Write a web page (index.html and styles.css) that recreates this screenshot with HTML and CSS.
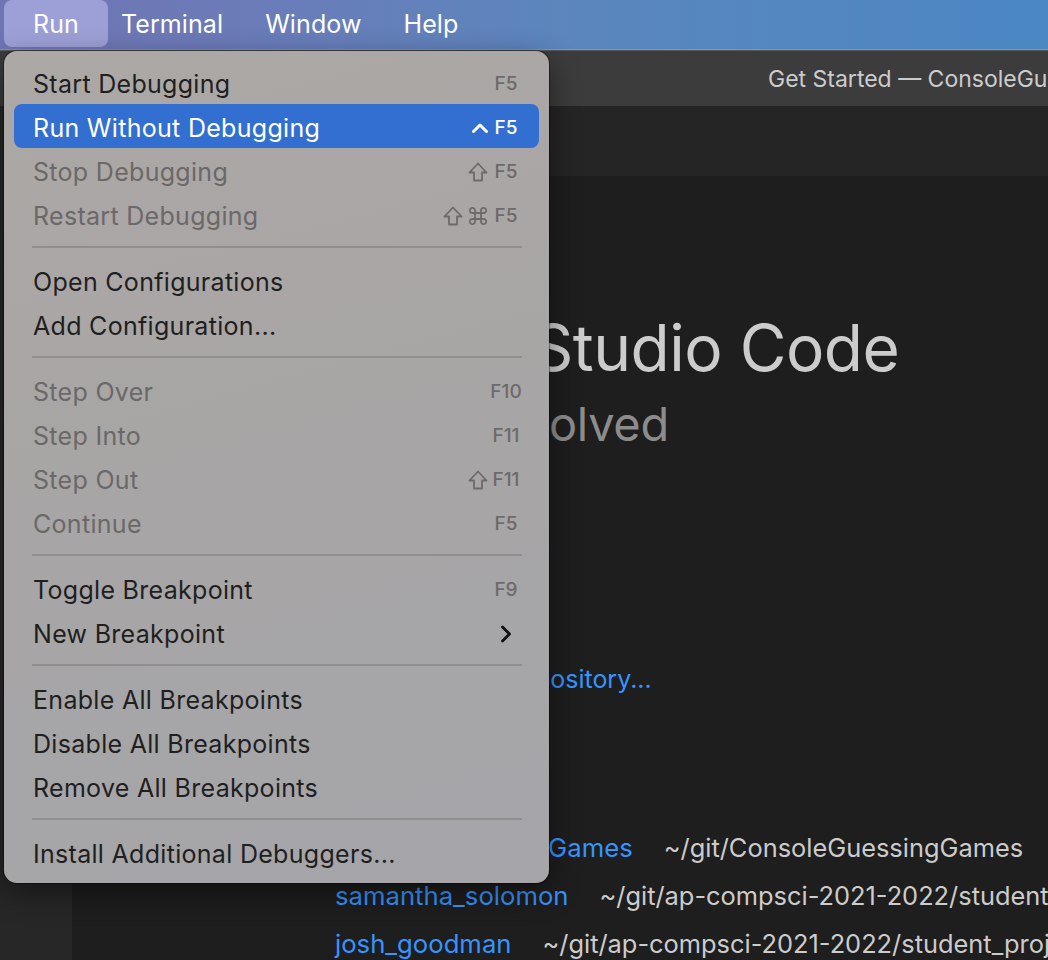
FILE: index.html
```html
<!DOCTYPE html>
<html>
<head>
<meta charset="utf-8">
<link rel="stylesheet" href="styles.css">
</head>
<body>
<div class="menubar">
  <span class="mb-item mb-active">Run</span>
  <span class="mb-item">Terminal</span>
  <span class="mb-item">Window</span>
  <span class="mb-item">Help</span>
</div>
<div class="window">
  <div class="titlebar"><span class="title">Get Started — ConsoleGuessingGames</span></div>
  <div class="workbench">
    <div class="activitybar"></div>
    <div class="main">
      <div class="tabs"></div>
      <div class="editor">
        <div class="welcome">
          <h1 class="w-title">Visual Studio Code</h1>
          <p class="w-subtitle">Editing evolved</p>
          <h2 class="w-heading w-start">Start</h2>
          <ul class="start-list">
            <li><span class="ico"></span><span class="link">New File...</span></li>
            <li><span class="ico"></span><span class="link">Open...</span></li>
            <li><span class="ico"></span><span class="link">Clone Git Repository...</span></li>
          </ul>
          <h2 class="w-heading w-recent">Recent</h2>
          <ul class="recent-list">
            <li><span class="link">ConsoleGuessingGames</span><span class="path">~/git/ConsoleGuessingGames</span></li>
            <li><span class="link">samantha_solomon</span><span class="path">~/git/ap-compsci-2021-2022/student_projects/samantha_solomon</span></li>
            <li><span class="link">josh_goodman</span><span class="path">~/git/ap-compsci-2021-2022/student_projects/josh_goodman</span></li>
          </ul>
        </div>
      </div>
    </div>
  </div>
</div>

<div class="dropdown">
  <div class="mi"><span class="lbl">Start Debugging</span><span class="mods"></span><span class="key">F5</span></div>
  <div class="mi mi-sel"><span class="lbl">Run Without Debugging</span><span class="mods"><svg class="caret" viewBox="0 0 16 10" width="16" height="10"><polyline points="1.5,8.5 8,2 14.5,8.5"/></svg></span><span class="key">F5</span></div>
  <div class="mi mi-dis"><span class="lbl">Stop Debugging</span><span class="mods"><svg class="shift" viewBox="0 0 20 20" width="20" height="20"><path d="M10 1.5 L18.5 10.5 H14 V18.5 H6 V10.5 H1.5 Z"/></svg></span><span class="key">F5</span></div>
  <div class="mi mi-dis"><span class="lbl">Restart Debugging</span><span class="mods"><svg class="shift" viewBox="0 0 20 20" width="20" height="20"><path d="M10 1.5 L18.5 10.5 H14 V18.5 H6 V10.5 H1.5 Z"/></svg><svg class="cmd" viewBox="0 0 20 20" width="20" height="20"><path d="M7 7 V4.5 A2.6 2.6 0 1 0 4.5 7 H15.5 A2.6 2.6 0 1 0 13 4.5 V15.5 A2.6 2.6 0 1 0 15.5 13 H4.5 A2.6 2.6 0 1 0 7 15.5 Z"/></svg></span><span class="key">F5</span></div>
  <div class="sep"></div>
  <div class="mi"><span class="lbl">Open Configurations</span></div>
  <div class="mi"><span class="lbl">Add Configuration...</span></div>
  <div class="sep"></div>
  <div class="mi mi-dis"><span class="lbl">Step Over</span><span class="mods"></span><span class="key">F10</span></div>
  <div class="mi mi-dis"><span class="lbl">Step Into</span><span class="mods"></span><span class="key">F11</span></div>
  <div class="mi mi-dis"><span class="lbl">Step Out</span><span class="mods"><svg class="shift" viewBox="0 0 20 20" width="20" height="20"><path d="M10 1.5 L18.5 10.5 H14 V18.5 H6 V10.5 H1.5 Z"/></svg></span><span class="key">F11</span></div>
  <div class="mi mi-dis"><span class="lbl">Continue</span><span class="mods"></span><span class="key">F5</span></div>
  <div class="sep"></div>
  <div class="mi"><span class="lbl">Toggle Breakpoint</span><span class="mods"></span><span class="key">F9</span></div>
  <div class="mi"><span class="lbl">New Breakpoint</span><span class="mods"></span><span class="key"><svg class="chev" viewBox="0 0 12 18" width="12" height="18"><polyline points="2.5,2 9.5,9 2.5,16"/></svg></span></div>
  <div class="sep"></div>
  <div class="mi"><span class="lbl">Enable All Breakpoints</span></div>
  <div class="mi"><span class="lbl">Disable All Breakpoints</span></div>
  <div class="mi"><span class="lbl">Remove All Breakpoints</span></div>
  <div class="sep"></div>
  <div class="mi"><span class="lbl">Install Additional Debuggers...</span></div>
</div>
</body>
</html>
```

FILE: styles.css
```css
html, body {
  margin: 0;
  padding: 0;
}
body {
  width: 1048px;
  height: 960px;
  overflow: hidden;
  background: #1e1e1e;
  font-family: Inter, "Liberation Sans", sans-serif;
  position: relative;
}

/* macOS menu bar */
.menubar {
  height: 49px;
  display: flex;
  align-items: flex-start;
  padding-left: 4px;
  background: linear-gradient(90deg, #7174b3 0%, #6a7cb9 25%, #5b86bd 55%, #4a87c3 100%);
  border-bottom: 1px solid #7f93ad;
  box-sizing: content-box;
}
.mb-item {
  height: 47px;
  line-height: 48px;
  padding: 0 21px;
  color: #ffffff;
  font-size: 25px;
  letter-spacing: 0.1px;
}
.mb-active {
  padding: 0 29px;
  margin-right: -8px;
  background: #9ca0d6;
  border-radius: 8px;
}

/* VS Code window */
.window {
  display: flex;
  flex-direction: column;
  height: 910px;
}
.titlebar {
  flex-shrink: 0;
  height: 56px;
  background: #3c3c3c;
  border-top: 1px solid #5a5a5a;
  box-sizing: border-box;
  display: flex;
  align-items: center;
  padding-left: 768px;
  white-space: nowrap;
  overflow: hidden;
}
.title {
  color: #cccccc;
  font-size: 23px;
}
.workbench {
  flex: 1;
  min-height: 0;
  display: flex;
}
.activitybar {
  width: 72px;
  flex-shrink: 0;
  background: #272727;
}
.main {
  flex: 1;
  min-width: 0;
  display: flex;
  flex-direction: column;
}
.tabs {
  flex-shrink: 0;
  height: 70px;
  background: #252525;
}
.editor {
  flex: 1;
  min-height: 0;
  background: #1e1e1e;
  padding-left: 263px;
  padding-top: 136px;
  overflow: hidden;
}
.welcome {
  white-space: nowrap;
}
.w-title {
  margin: 0;
  font-size: 64px;
  line-height: 72px;
  font-weight: 400;
  color: #cccccc;
  letter-spacing: -0.5px;
}
.w-subtitle {
  margin: 12px 0 0;
  font-size: 47px;
  line-height: 56px;
  color: #8c8c8c;
  letter-spacing: -0.3px;
}
.w-heading {
  margin: 0;
  font-size: 30px;
  line-height: 40px;
  font-weight: 400;
  color: #cccccc;
}
.w-start {
  margin-top: 52px;
}
.w-recent {
  margin-top: 82px;
}
ul {
  list-style: none;
  margin: 0;
  padding: 0;
}
.start-list {
  margin-top: 22px;
}
.start-list li {
  height: 45px;
  display: flex;
  align-items: center;
  gap: 26px;
}
.ico {
  width: 28px;
  height: 28px;
  display: inline-block;
}
.link {
  color: #3794ff;
  font-size: 25px;
}
.recent-list li {
  height: 48px;
  display: flex;
  align-items: center;
}
.recent-list .link {
  font-size: 25.7px;
}
.path {
  color: #cccccc;
  font-size: 25.4px;
  margin-left: 31px;
}

/* dropdown menu (overlay) */
.dropdown {
  position: absolute;
  left: 4px;
  top: 51px;
  width: 545px;
  box-sizing: border-box;
  padding: 9px 0;
  border-radius: 13px;
  background: linear-gradient(165deg, #aca8a5 0%, #a8a5a5 45%, #a5a5aa 100%);
  box-shadow: 0 0 0 1px rgba(0, 0, 0, 0.35), 0 10px 30px rgba(0, 0, 0, 0.45);
}
.mi {
  height: 44px;
  box-sizing: border-box;
  margin: 0 10px;
  padding: 3px 15px 0 19px;
  border-radius: 8px;
  display: flex;
  align-items: center;
  color: #1f1f1f;
  font-size: 25px;
  letter-spacing: 0.3px;
}
.mi-dis {
  color: #6b6868;
}
.mi-sel {
  background: #326fd1;
  color: #ffffff;
}
.lbl {
  flex: 1;
  min-width: 0;
}
.mods {
  display: flex;
  align-items: center;
  gap: 5px;
}
.key {
  width: 36px;
  flex-shrink: 0;
  display: flex;
  justify-content: center;
  align-items: center;
  font-size: 19px;
  font-weight: 500;
  color: #6d6a6a;
  letter-spacing: 0;
}
.mi-sel .key {
  color: #ffffff;
}
.caret polyline {
  fill: none;
  stroke: #ffffff;
  stroke-width: 3;
  stroke-linecap: round;
  stroke-linejoin: round;
}
.shift path, .cmd path {
  fill: none;
  stroke: #6d6a6a;
  stroke-width: 1.8;
  stroke-linejoin: round;
}
.chev polyline {
  fill: none;
  stroke: #111111;
  stroke-width: 2.8;
  stroke-linecap: round;
  stroke-linejoin: round;
}
.sep {
  height: 22px;
  margin: 0 27px 0 28px;
  display: flex;
  align-items: center;
}
.sep::before {
  content: "";
  display: block;
  width: 100%;
  height: 2px;
  background: #918e8e;
}
```
